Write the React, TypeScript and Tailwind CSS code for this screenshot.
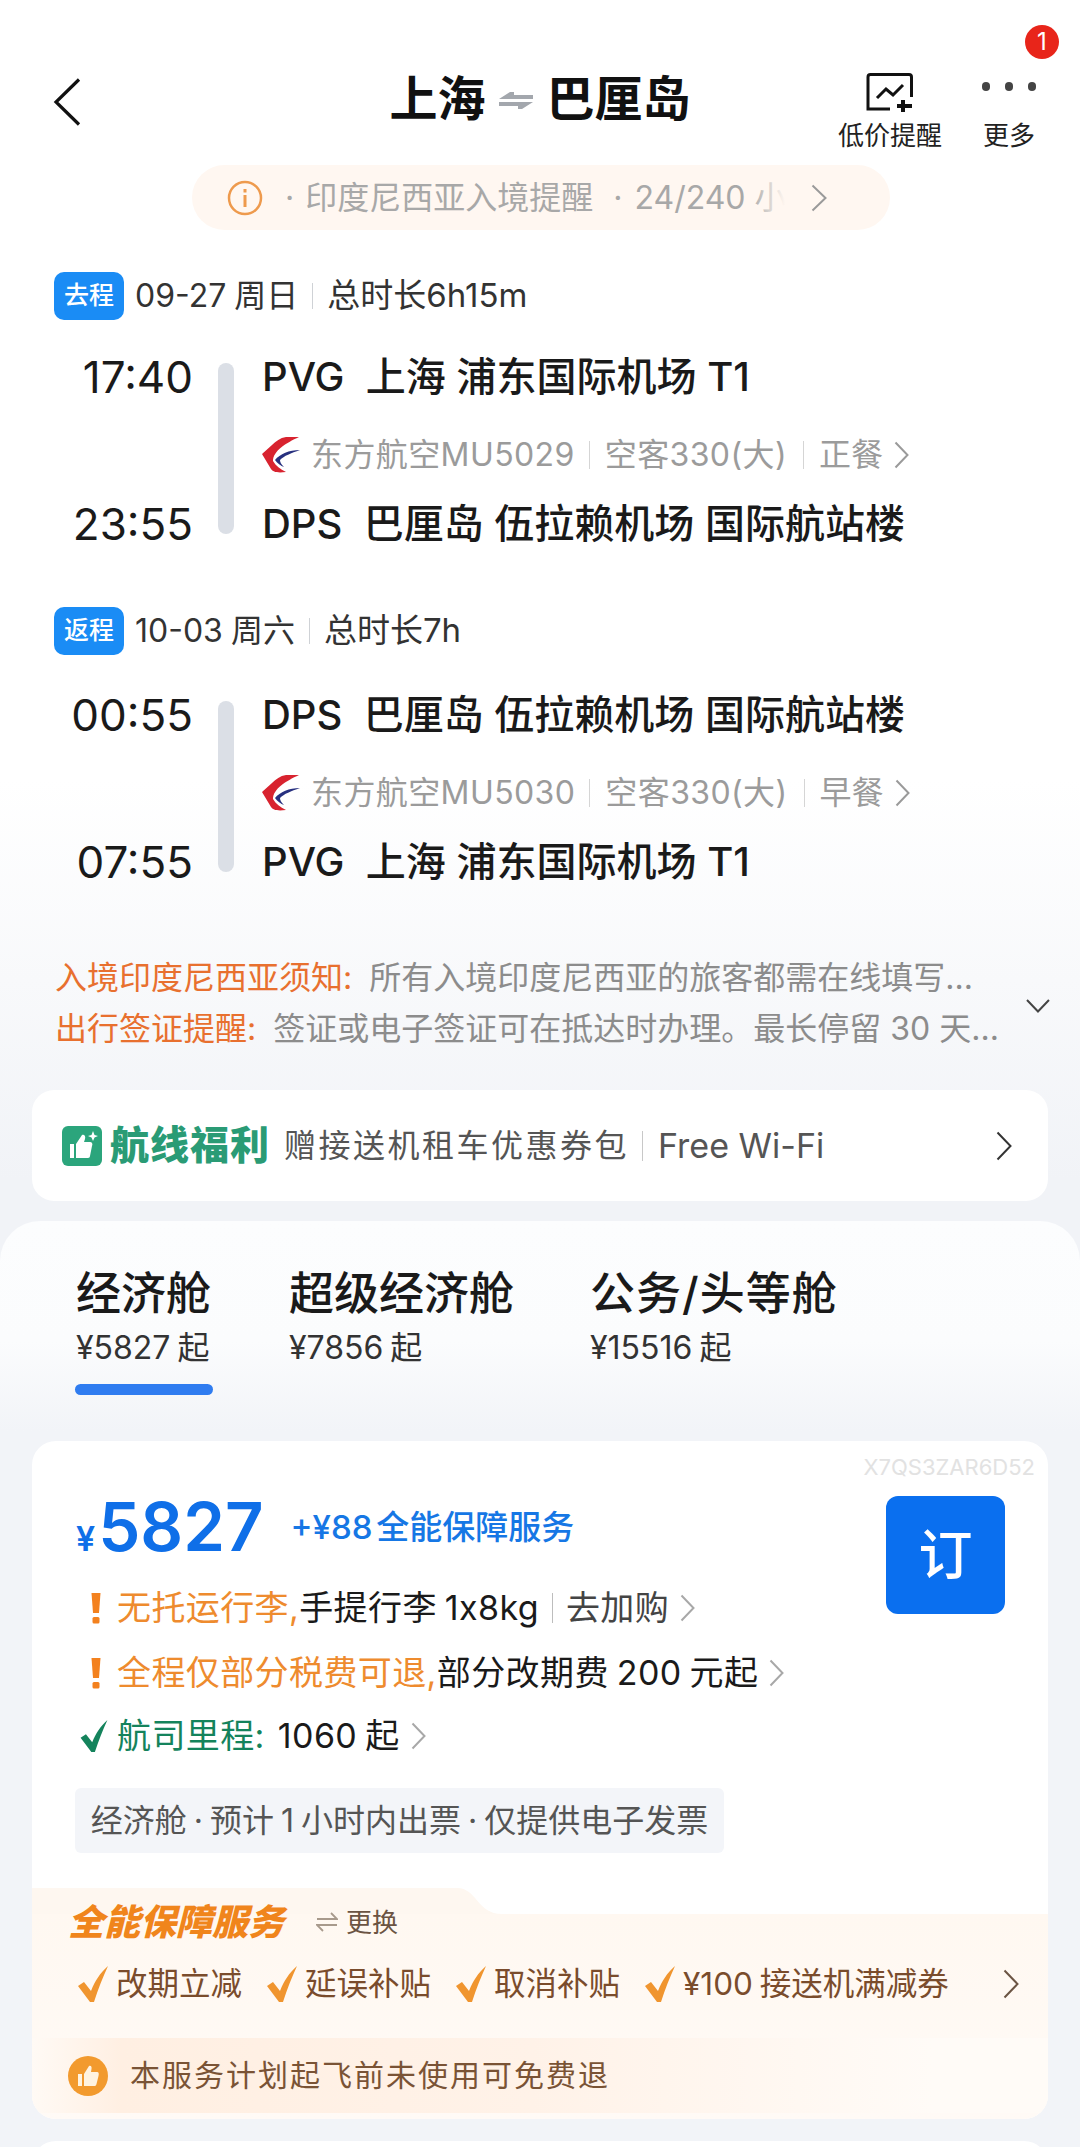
import React from "react";

const Chev = ({ w = 15, h = 28, c = "#9a9a9a", s = 2 }: { w?: number; h?: number; c?: string; s?: number }) => (
  <svg width={w} height={h} viewBox={`0 0 ${w} ${h}`} fill="none" className="shrink-0">
    <path d={`M1.5 1.5 L${w - 1.5} ${h / 2} L1.5 ${h - 1.5}`} stroke={c} strokeWidth={s} />
  </svg>
);

const MuLogo = () => (
  <svg width="38" height="36" viewBox="0 0 38 36" className="shrink-0">
    <path d="M37 0 H24 C18 1 14 4 10 8 L0 17 L9 32 C11 35 15 36 24 35 C18 32 14 29 11 24 C11 14 24 6 37 0 Z" fill="#d8232f" />
    <path d="M38 13 C27 13 18 17 13 23 C15 26 19 29 22 30 C19 27 18 25 18 23 C22 19 29 16 38 13 Z" fill="#27307f" />
  </svg>
);

const Leg = ({
  tag, date, dur, t1, t2, a1, a2, flight, meal, legMt,
}: { tag: string; date: string; dur: string; t1: string; t2: string; a1: string; a2: string; flight: string; meal: string; legMt: string }) => (
  <div>
    <div className="flex items-center h-[48px] ml-[54px]">
      <div className="w-[70px] h-[48px] rounded-[10px] bg-[#1a8cf5] text-white text-[25px] font-medium flex items-center justify-center">{tag}</div>
      <span className="ml-[11px] text-[32px] text-[#333333] [word-spacing:-1px]">{date}</span>
      <span className="ml-[14px] w-[1px] h-[26px] bg-[#cfd2d6]" />
      <span className="ml-[14px] text-[33px] text-[#333333]">{dur}</span>
    </div>
    <div className={`flex h-[195px] ${legMt}`}>
      <div className="w-[193px] flex flex-col justify-between text-right text-[44px] leading-[48px] font-normal text-[#1a1a1a] shrink-0">
        <div>{t1}</div>
        <div>{t2}</div>
      </div>
      <div className="ml-[25px] w-[16px] h-[171px] mt-[10px] rounded-full bg-[#dbdfe6] shrink-0" />
      <div className="ml-[28px] flex flex-col text-[40px] leading-[48px] font-medium text-[#1a1a1a] whitespace-pre">
        <div>{a1}</div>
        <div className="h-[40px] mt-[34px] flex items-center text-[32px] font-normal text-[#9b9b9b]">
          <MuLogo />
          <span className="ml-[11px] tracking-[0.4px]">东方航空{flight}</span>
          <span className="ml-[14px] w-[1px] h-[28px] bg-[#d5d5d5]" />
          <span className="ml-[15px] tracking-[0.4px]">空客330(大)</span>
          <span className="ml-[16px] w-[1px] h-[28px] bg-[#d5d5d5]" />
          <span className="ml-[15px]">{meal}</span>
          <span className="ml-[11px]"><Chev /></span>
        </div>
        <div className="mt-[25px]">{a2}</div>
      </div>
    </div>
  </div>
);

const Warn = () => (
  <svg width="12" height="32" viewBox="0 0 12 32" className="shrink-0"><path d="M1.5 1 H10.5 L9 21 H3 Z" fill="#f3811e" /><rect x="2.5" y="25" width="7" height="6.5" rx="1.5" fill="#f3811e" /></svg>
);

const Tick = ({ c = "#f0952f", w = 30, h = 38 }: { c?: string; w?: number; h?: number }) => (
  <svg width={w} height={h} viewBox="0 0 30 38" className="shrink-0"><path d="M0 21 L6 17 L13 26 C17 16 22 8 30 1 C25 12 20 24 16 37 H12 Z" fill={c} /></svg>
);

const Perk = ({ t, ml }: { t: string; ml: string }) => (
  <div className={`flex items-center ${ml}`}>
    <Tick />
    <span className="ml-[8px]">{t}</span>
  </div>
);

export default function App() {
  return (
    <div className="w-[1080px] h-[2147px] overflow-hidden relative font-[family-name:Inter,'Noto_Sans_CJK_SC',sans-serif] bg-[linear-gradient(180deg,#ffffff_0px,#ffffff_780px,#f1f3f7_1180px,#f1f3f7_100%)]">
      {/* header */}
      <div className="grid grid-cols-[1fr_auto_1fr] h-[165px]">
        <div className="pl-[53px] pt-[78px]">
          <svg width="28" height="48" viewBox="0 0 28 48" fill="none"><path d="M26 1.5 L3 24 L26 46.5" stroke="#111111" strokeWidth="3.2" /></svg>
        </div>
        <div className="flex items-start pt-[69px] text-[48px] leading-[60px] font-bold text-[#111111] whitespace-nowrap">
          <span>上海</span>
          <svg width="34" height="17" viewBox="0 0 34 17" className="ml-[13px] mr-[14px] mt-[23px]">
            <path d="M0 7 L11 0 H15 V3 H34 V7 Z" fill="#a3a7ad" />
            <path d="M34 10 L23 17 H19 V14 H0 V10 Z" fill="#a3a7ad" />
          </svg>
          <span>巴厘岛</span>
        </div>
        <div className="flex justify-end pr-[44px] pt-[73px] text-[26px] leading-[34px] text-[#222222] relative">
          <div className="flex flex-col items-center">
            <svg width="48" height="40" viewBox="0 0 48 40" fill="none">
              <path d="M24 36 H2 V4 Q2 1.500 4.500 1.500 H43 Q45.500 1.500 45.500 4 V24" stroke="#111111" strokeWidth="3" />
              <path d="M11 25 L20 16 L27 22 L37 12" stroke="#111111" strokeWidth="3" />
              <path d="M37 27 V39 M31 33 H46" stroke="#111111" strokeWidth="4" />
            </svg>
            <div className="mt-[6px] whitespace-nowrap">低价提醒</div>
          </div>
          <div className="flex flex-col items-center ml-[40px]">
            <div className="h-[40px] flex gap-[15px] items-start pt-[9px]">
              <span className="w-[8px] h-[9px] rounded-full bg-[#444444]" />
              <span className="w-[8px] h-[9px] rounded-full bg-[#444444]" />
              <span className="w-[8px] h-[9px] rounded-full bg-[#444444]" />
            </div>
            <div className="mt-[6px] whitespace-nowrap">更多</div>
          </div>
          <div className="absolute right-[21px] top-[25px] w-[34px] h-[34px] rounded-full bg-[#e8251a] text-white text-[24px] flex items-center justify-center">1</div>
        </div>
      </div>

      {/* notice pill */}
      <div className="ml-[192px] w-[698px] h-[65px] rounded-full bg-[#fff7f1] flex items-center text-[#a8a8a8] text-[32px] whitespace-nowrap">
        <svg width="36" height="36" viewBox="0 0 36 36" fill="none" className="ml-[35px] shrink-0">
          <circle cx="18" cy="18" r="16" stroke="#ee9a4d" strokeWidth="2.5" />
          <rect x="16.500" y="15" width="3" height="12" fill="#ee9a4d" />
          <rect x="16.500" y="9" width="3" height="3.500" fill="#ee9a4d" />
        </svg>
        <span className="ml-[22px]">·</span>
        <span className="ml-[11px]">印度尼西亚入境提醒</span>
        <span className="ml-[20px]">·</span>
        <div className="ml-[12px] w-[160px] overflow-hidden relative shrink-0">
          <span>24/240 小时</span>
          <div className="absolute inset-y-0 right-0 w-[44px] bg-[linear-gradient(90deg,rgba(255,247,241,0),#fff7f1_80%)]" />
        </div>
        <span className="ml-[17px]"><Chev w={16} h={28} c="#9a9a9a" /></span>
      </div>

      <div className="mt-[42px]">
        <Leg tag="去程" date="09-27 周日" dur="总时长6h15m" t1="17:40" t2="23:55" a1="PVG  上海 浦东国际机场 T1" a2="DPS  巴厘岛 伍拉赖机场 国际航站楼" flight="MU5029" meal="正餐" legMt="mt-[33px]" />
        <div className="h-[59px]" />
        <Leg tag="返程" date="10-03 周六" dur="总时长7h" t1="00:55" t2="07:55" a1="DPS  巴厘岛 伍拉赖机场 国际航站楼" a2="PVG  上海 浦东国际机场 T1" flight="MU5030" meal="早餐" legMt="mt-[36px]" />
      </div>

      {/* notices */}
      <div className="mt-[66px] ml-[55px] mr-[30px] flex items-center text-[32px] leading-[51px] whitespace-nowrap">
        <div className="w-[965px]">
          <div><span className="text-[#e8702f]">入境印度尼西亚须知:</span><span className="ml-[17px] text-[#8c8c8c]">所有入境印度尼西亚的旅客都需在线填写...</span></div>
          <div><span className="text-[#e8702f]">出行签证提醒:</span><span className="ml-[17px] text-[#8c8c8c]">签证或电子签证可在抵达时办理。最长停留 30 天...</span></div>
        </div>
        <svg width="24" height="14" viewBox="0 0 24 14" fill="none" className="ml-[7px] mt-[6px]"><path d="M1 1 L12 12.500 L23 1" stroke="#444444" strokeWidth="2" /></svg>
      </div>

      {/* welfare */}
      <div className="mt-[36px] mx-[32px] h-[111px] rounded-[22px] bg-white flex items-center pl-[30px] pr-[36px]">
        <svg width="40" height="40" viewBox="0 0 40 40" className="shrink-0">
          <rect width="40" height="40" rx="6" fill="#2ba57c" />
          <path d="M8 18 H12 V32 H8 Z M14 18 L20 9 C22 8 24 10 23 13 L22 16 H28 C30 16 31 18 30 20 L28 30 C28 32 26 32 25 32 H14 Z" fill="#ffffff" />
          <path d="M31 5 L32.500 9 L36 10 L32.500 11.500 L31 15 L29.500 11.500 L26 10 L29.500 9 Z" fill="#ffffff" />
        </svg>
        <span className="ml-[8px] text-[39px] font-black text-[#2a9b75] tracking-[1px] whitespace-nowrap">航线福利</span>
        <span className="ml-[14px] text-[32px] text-[#555555] tracking-[2.500px] whitespace-nowrap">赠接送机租车优惠券包</span>
        <span className="ml-[13px] w-[1px] h-[30px] bg-[#c8c8c8]" />
        <span className="ml-[15px] text-[34px] text-[#555555] whitespace-nowrap">Free Wi-Fi</span>
        <span className="ml-auto"><Chev w={16} h={30} c="#333333" /></span>
      </div>

      {/* panel */}
      <div className="mt-[20px] h-[940px] rounded-t-[40px] bg-[linear-gradient(180deg,#fcfdfe_0px,#fbfcfd_120px,#f2f4f8_210px)] pt-[46px]">
        <div className="flex pl-[76px] text-[#333333] whitespace-nowrap h-[174px]">
          <div className="w-[213px]">
            <div className="text-[45px] leading-[54px] font-medium text-[#1a1a1a]">经济舱</div>
            <div className="text-[32px] leading-[40px] mt-[7px] [word-spacing:-2px]">¥5827 起</div>
            <div className="mt-[16px] w-[138px] h-[11px] -ml-[1px] rounded-full bg-[#2f7cf0]" />
          </div>
          <div className="w-[303px]">
            <div className="text-[45px] leading-[54px] font-medium text-[#1a1a1a]">超级经济舱</div>
            <div className="text-[32px] leading-[40px] mt-[7px] [word-spacing:-2px]">¥7856 起</div>
          </div>
          <div className="-ml-[2px]">
            <div className="text-[45px] leading-[54px] font-medium text-[#1a1a1a] tracking-[1px]">公务/头等舱</div>
            <div className="text-[32px] leading-[40px] mt-[7px] [word-spacing:-2px]">¥15516 起</div>
          </div>
        </div>

        {/* fare card */}
        <div className="mx-[32px] h-[678px] rounded-[24px] bg-white overflow-hidden flex flex-col">
          <div className="text-right pr-[13px] pt-[12px] text-[22px] leading-[28px] text-[#e2e2e2]">X7QS3ZAR6D52</div>
          <div className="flex items-start">
            <div className="pl-[44px] flex-1 whitespace-nowrap">
              <div className="flex items-center h-[70px] text-[#0f6fe8] font-semibold mt-[12px]">
                <div className="flex items-baseline">
                  <span className="text-[34px]">¥</span>
                  <span className="text-[67px] leading-[70px] ml-[3px]">5827</span>
                </div>
                <span className="ml-[27px] text-[33px] font-medium text-[#1677e5] [word-spacing:-5px]">+¥88 全能保障服务</span>
              </div>
              <div className="text-[34px] leading-[50px] text-[#1a1a1a] mt-[20px] ml-[14px] tracking-[0.4px] [word-spacing:-2px]">
                <div className="flex items-center h-[50px]">
                  <Warn /><span className="ml-[15px] text-[#ee8b2e]">无托运行李,</span><span>手提行李 1x8kg</span>
                  <span className="ml-[13px] w-[1px] h-[30px] bg-[#bdbdbd]" /><span className="ml-[13px] text-[#444444]">去加购</span>
                  <span className="ml-[11px]"><Chev c="#a8a8a8" /></span>
                </div>
                <div className="flex items-center h-[50px] mt-[15px]">
                  <Warn /><span className="ml-[15px] text-[#ee8b2e]">全程仅部分税费可退,</span><span>部分改期费 200 元起</span>
                  <span className="ml-[11px]"><Chev c="#a8a8a8" /></span>
                </div>
                <div className="flex items-center h-[50px] mt-[13px] -ml-[10px]">
                  <Tick c="#14835c" w={28} h={34} /><span className="ml-[9px] text-[#14835c]">航司里程:</span><span className="ml-[13px]">1060 起</span>
                  <span className="ml-[11px]"><Chev c="#a8a8a8" /></span>
                </div>
              </div>
            </div>
            <div className="mr-[43px] mt-[15px] w-[119px] h-[118px] rounded-[12px] bg-[#0a6fef] text-white text-[54px] font-medium flex items-center justify-center shrink-0">订</div>
          </div>
          <div className="ml-[43px] mt-[27px] w-[649px] h-[65px] rounded-[6px] bg-[#f3f5f9] flex items-center justify-center text-[32px] text-[#555555] whitespace-nowrap [word-spacing:-2px]">经济舱 · 预计 1 小时内出票 · 仅提供电子发票</div>

          {/* guarantee */}
          <div className="relative mt-[35px] flex-1">
            <svg width="470" height="26" viewBox="0 0 470 26" className="absolute left-0 top-0"><path d="M0 26 V0 H425 C445 0 445 26 470 26 Z" fill="#fef7f0" /></svg>
            <div className="absolute left-0 right-0 top-[26px] bottom-0 bg-[linear-gradient(180deg,#fff8f1,#fffaf6)]" />
            <div className="relative flex items-center h-[68px] pl-[36px] whitespace-nowrap">
              <span className="text-[36px] font-black italic text-[#f0851c]">全能保障服务</span>
              <svg width="22" height="20" viewBox="0 0 22 20" fill="none" className="ml-[32px]"><path d="M1 7 H21 L15 1 M21 13 H1 L7 19" stroke="#a89a8c" strokeWidth="1.800" /></svg>
              <span className="ml-[8px] text-[26px] text-[#6b5443]">更换</span>
            </div>
            <div className="relative flex items-center h-[50px] mt-[3px] pl-[46px] text-[31.500px] text-[#7a4c2c] whitespace-nowrap [word-spacing:-2px]">
              <Perk t="改期立减" ml="" />
              <Perk t="延误补贴" ml="ml-[25px]" />
              <Perk t="取消补贴" ml="ml-[25px]" />
              <Perk t="¥100 接送机满减券" ml="ml-[25px]" />
              <span className="absolute left-[971px] top-[10px]"><Chev w={16} h={30} c="#6b5443" /></span>
            </div>
            <div className="relative mt-[29px] h-[75px] flex items-center pl-[36px] bg-[linear-gradient(90deg,#fffaf5_0px,#ffefe2_90px,#fff2e8_500px,#fffbf7_900px)]">
              <div className="w-[40px] h-[40px] rounded-full bg-[#f29a2e] flex items-center justify-center shrink-0">
                <svg width="24" height="24" viewBox="0 0 24 24"><path d="M2 10 H6 V22 H2 Z M8 10 L13 2 C15 1 16 3 15.500 5 L15 8 H21 C23 8 23 10 22.500 12 L20.500 20 C20 22 19 22 18 22 H8 Z" fill="#fff3e0" /></svg>
              </div>
              <span className="ml-[22px] text-[30px] text-[#7a5335] tracking-[2px] whitespace-nowrap">本服务计划起飞前未使用可免费退</span>
            </div>
          </div>
        </div>

        {/* next card */}
        <div className="mt-[22px] mx-[32px] h-[60px] rounded-t-[24px] bg-white" />
      </div>
    </div>
  );
}
